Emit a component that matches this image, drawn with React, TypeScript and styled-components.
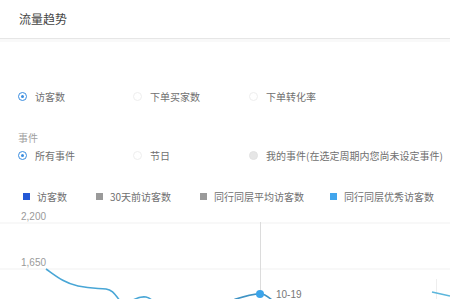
import React from "react";
import styled, { createGlobalStyle } from "styled-components";

const GlobalStyle = createGlobalStyle`
  body {
    margin: 0;
    background: #fff;
    font-family: "Noto Sans CJK SC", "Liberation Sans", sans-serif;
    color: #666;
  }
`;

type RadioState = "on" | "off" | "disabled";

const metricOptions: { label: string; state: RadioState }[] = [
  { label: "访客数", state: "on" },
  { label: "下单买家数", state: "off" },
  { label: "下单转化率", state: "off" },
];

const eventOptions: { label: string; state: RadioState }[] = [
  { label: "所有事件", state: "on" },
  { label: "节日", state: "off" },
  { label: "我的事件(在选定周期内您尚未设定事件)", state: "disabled" },
];

const legend = [
  { label: "访客数", color: "#2358d6" },
  { label: "30天前访客数", color: "#9a9a9a" },
  { label: "同行同层平均访客数", color: "#9a9a9a" },
  { label: "同行同层优秀访客数", color: "#42a5ec" },
];

const App: React.FC = () => {
  return (
    <>
      <GlobalStyle />
      <Panel>
        <Header>
          <Title>流量趋势</Title>
        </Header>

        <RadioRow $top={50}>
          {metricOptions.map((o) => (
            <RadioItem key={o.label}>
              <RadioDot $state={o.state} />
              <RadioLabel>{o.label}</RadioLabel>
            </RadioItem>
          ))}
        </RadioRow>

        <SectionLabel>事件</SectionLabel>
        <RadioRow $top={3}>
          {eventOptions.map((o) => (
            <RadioItem key={o.label}>
              <RadioDot $state={o.state} />
              <RadioLabel>{o.label}</RadioLabel>
            </RadioItem>
          ))}
        </RadioRow>

        <Legend>
          {legend.map((l) => (
            <LegendItem key={l.label}>
              <Swatch $color={l.color} />
              <span>{l.label}</span>
            </LegendItem>
          ))}
        </Legend>

        <Chart>
          <svg width="450" height="92" viewBox="0 0 450 92">
            <line x1="0" y1="16" x2="450" y2="16" stroke="#f1f1f1" strokeWidth="1" />
            <line x1="0" y1="62" x2="450" y2="62" stroke="#f1f1f1" strokeWidth="1" />
            <text x="21" y="13" fontSize="10" fill="#9a9a9a" fontFamily="Liberation Sans, sans-serif">
              2,200
            </text>
            <text x="21" y="59" fontSize="10" fill="#9a9a9a" fontFamily="Liberation Sans, sans-serif">
              1,650
            </text>
            <line x1="260.5" y1="15" x2="260.5" y2="87" stroke="#dcdcdc" strokeWidth="1" />
            <line x1="436.5" y1="72" x2="436.5" y2="92" stroke="#eeeeee" strokeWidth="1" />
            <path
              d="M46,62 C56,69 64,76 78,79 S98,81 106,82 S116,90 122,96 L128,102"
              fill="none"
              stroke="#48a6d6"
              strokeWidth="1.6"
            />
            <path
              d="M128,96 C134,92 140,89 146,90 S152,94 158,100"
              fill="none"
              stroke="#48a6d6"
              strokeWidth="1.6"
            />
            <path
              d="M218,100 C228,94 246,88 260,86.5 C263,86.5 266,88 272,93 L280,100"
              fill="none"
              stroke="#3f93c4"
              strokeWidth="1.6"
            />
            <path d="M432,85 L450,89" fill="none" stroke="#5bb6dc" strokeWidth="1.6" />
            <circle cx="260" cy="87" r="4" fill="#3ba4ea" />
            <text x="276" y="91" fontSize="10" fill="#777" fontFamily="Liberation Sans, sans-serif">
              10-19
            </text>
          </svg>
        </Chart>
      </Panel>
    </>
  );
};

const Panel = styled.div`
  width: 450px;
  height: 300px;
  overflow: hidden;
`;

const Header = styled.div`
  height: 39px;
  display: flex;
  align-items: center;
  padding-left: 19px;
  border-bottom: 1px solid #e6e6e6;
  box-shadow: 0 3px 0 #f9f9f9;
  box-sizing: border-box;
`;

const Title = styled.div`
  font-size: 12px;
  color: #444;
  margin-top: -2px;
`;

const RadioRow = styled.div<{ $top: number }>`
  display: grid;
  grid-template-columns: 115px 116px auto;
  padding-left: 18px;
  margin-top: ${(p) => p.$top}px;
  height: 14px;
  align-items: center;
`;

const RadioItem = styled.div`
  display: flex;
  align-items: center;
  gap: 8px;
`;

const RadioDot = styled.span<{ $state: RadioState }>`
  width: 9px;
  height: 9px;
  border-radius: 50%;
  box-sizing: border-box;
  flex: none;
  position: relative;
  border: 1px solid
    ${(p) => (p.$state === "on" ? "#3a8de0" : p.$state === "disabled" ? "#e2e2e2" : "#eeeeee")};
  background: ${(p) => (p.$state === "disabled" ? "#e6e6e6" : "#fff")};

  &::after {
    content: "";
    display: ${(p) => (p.$state === "on" ? "block" : "none")};
    position: absolute;
    left: 2px;
    top: 2px;
    width: 3px;
    height: 3px;
    border-radius: 50%;
    background: #3a8de0;
  }
`;

const RadioLabel = styled.span`
  font-size: 10px;
  color: #707070;
  white-space: nowrap;
`;

const SectionLabel = styled.div`
  font-size: 10px;
  color: #a0a0a0;
  padding-left: 18px;
  margin-top: 28px;
  height: 14px;
  line-height: 14px;
`;

const Legend = styled.div`
  display: grid;
  grid-template-columns: 73px 104px 130px auto;
  padding-left: 23px;
  margin-top: 27px;
  height: 14px;
  align-items: center;
`;

const LegendItem = styled.div`
  display: flex;
  align-items: center;
  gap: 7px;
  font-size: 10px;
  color: #707070;
  white-space: nowrap;
`;

const Swatch = styled.span<{ $color: string }>`
  width: 7px;
  height: 7px;
  background: ${(p) => p.$color};
  flex: none;
`;

const Chart = styled.div`
  margin-top: 4px;
  height: 92px;
  svg {
    display: block;
  }
`;

export default App;
